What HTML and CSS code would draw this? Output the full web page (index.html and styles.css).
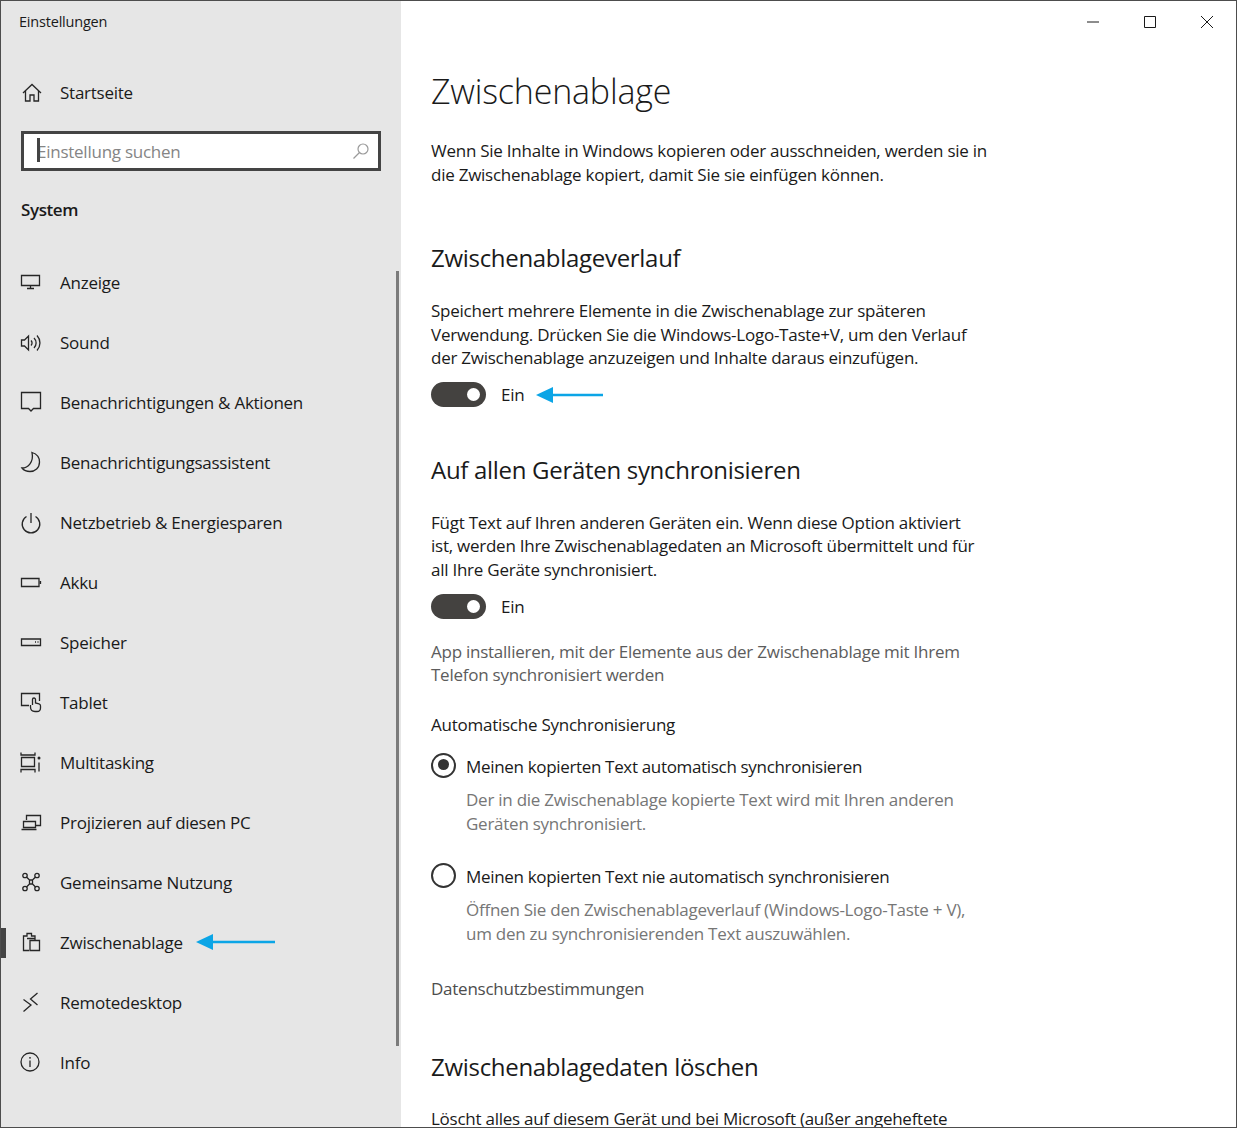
FILE: index.html
```html
<!DOCTYPE html>
<html lang="de">
<head>
  <meta charset="UTF-8" />
  <title>Einstellungen</title>
  <link rel="stylesheet" href="styles.css">
</head>
<body>
  <div class="window">
    <aside class="sidebar">
      <div class="app-title">Einstellungen</div>
      <a class="nav-item home">
        <svg class="icon" viewBox="0 0 24 24"><path d="M3 12 12 3.500l9 8.500M5.500 10v10H10v-6h4v6h4.500V10"/></svg>
        <span>Startseite</span>
      </a>
      <div class="search">
        <span class="caret"></span>
        <span class="search-text">Einstellung suchen</span>
        <svg class="search-icon" viewBox="0 0 18 18"><circle cx="11" cy="7" r="5"/><path d="M7.500 10.500 1.500 16.500"/></svg>
      </div>
      <div class="section-title">System</div>
      <nav class="nav">
        <a class="nav-item">
          <svg class="icon" viewBox="0 0 24 24"><path d="M1.500 4.500h18v10h-18zM10.500 14.500v3M7 17.500h7"/></svg>
          <span>Anzeige</span>
        </a>
        <a class="nav-item">
          <svg class="icon" viewBox="0 0 24 24"><path d="M1.500 9h3l4-4v14l-4-4h-3zM11 9.500a3.500 3.500 0 0 1 0 5M14 7a7 7 0 0 1 0 10M17 4.500a11 11 0 0 1 0 15"/></svg>
          <span>Sound</span>
        </a>
        <a class="nav-item">
          <svg class="icon" viewBox="0 0 24 24"><path d="M1.500 1.500h19v16h-7l-2.500 2.500-2.500-2.500h-7z"/></svg>
          <span>Benachrichtigungen &amp; Aktionen</span>
        </a>
        <a class="nav-item">
          <svg class="icon" viewBox="0 0 24 24"><path d="M12 1.500c5 1.500 7.500 5.500 7.500 9.500 0 6-4.500 9.500-9.500 9.500-3 0-6-1-8-3.500 6 0 12-6 10-15.500z"/></svg>
          <span>Benachrichtigungsassistent</span>
        </a>
        <a class="nav-item">
          <svg class="icon" viewBox="0 0 24 24"><path d="M6.500 5.500a8.800 8.800 0 1 0 9 0M11 2v10"/></svg>
          <span>Netzbetrieb &amp; Energiesparen</span>
        </a>
        <a class="nav-item">
          <svg class="icon" viewBox="0 0 24 24"><path d="M1.500 7.500h17.500v8H1.500zM20.500 10v3"/></svg>
          <span>Akku</span>
        </a>
        <a class="nav-item">
          <svg class="icon" viewBox="0 0 24 24"><path d="M1.500 8h19v6.500h-19zM15 11h1M17.500 11h1"/></svg>
          <span>Speicher</span>
        </a>
        <a class="nav-item">
          <svg class="icon" viewBox="0 0 24 24"><path d="M9 14.500H1.500v-12h18V10M12.500 14V8.500a1.500 1.500 0 0 1 3 0V12l3.500.8c1 .3 1.500 1 1.500 2v2.200c0 2-1.500 3.500-3.500 3.500h-2c-3 0-4.500-2-4.500-4.500v-2"/></svg>
          <span>Tablet</span>
        </a>
        <a class="nav-item">
          <svg class="icon" viewBox="0 0 24 24"><path d="M1 1.500v2.500h14V1.500M1.500 6.500h13v9h-13zM1 21.500V18.500h14v3M19 11.500v9"/><circle class="dot" cx="19" cy="7" r="1.500"/></svg>
          <span>Multitasking</span>
        </a>
        <a class="nav-item">
          <svg class="icon" viewBox="0 0 24 24"><path d="M6.500 9V4.500h14v10h-5M3.500 10.500h12v6h-12zM1.500 18.500h15"/></svg>
          <span>Projizieren auf diesen PC</span>
        </a>
        <a class="nav-item">
          <svg class="icon" viewBox="0 0 24 24"><circle cx="5" cy="4.500" r="2.200"/><circle cx="17" cy="4.500" r="2.200"/><circle cx="5" cy="17.500" r="2.200"/><circle cx="17" cy="17.500" r="2.200"/><path d="M6.500 6 9.500 9M15.500 6l-3 3M6.500 16l3-3M15.500 16l-3-3M9.500 9h3v4h-3z"/></svg>
          <span>Gemeinsame Nutzung</span>
        </a>
        <a class="nav-item active">
          <svg class="icon" viewBox="0 0 24 24"><path d="M9 19.500H3.500V5H7V2.500h4.500V5H15v4M10 9.500h9.500v10H10zM7 7.500h8"/></svg>
          <span>Zwischenablage</span>
          <svg class="arrow arrow-nav" viewBox="0 0 79 20"><path d="M17 10h62" /><path class="head" d="M0 10 17 2v16z"/></svg>
        </a>
        <a class="nav-item">
          <svg class="icon" viewBox="0 0 24 24"><path d="M3.500 8.500 11 14l-7.500 6.500M17.500 2 10.500 8l7 6"/></svg>
          <span>Remotedesktop</span>
        </a>
        <a class="nav-item">
          <svg class="icon" viewBox="0 0 24 24"><circle cx="10" cy="11" r="9"/><path d="M10 9.500V16"/><circle class="dot" cx="10" cy="6.800" r=".9"/></svg>
          <span>Info</span>
        </a>
      </nav>
      <div class="scrollbar"></div>
    </aside>

    <main class="content">
      <div class="titlebar">
        <span class="win-btn"><svg viewBox="0 0 14 14"><path d="M1 7h12"/></svg></span>
        <span class="win-btn"><svg viewBox="0 0 14 14"><path d="M1.500 1.500h11v11h-11z"/></svg></span>
        <span class="win-btn"><svg viewBox="0 0 14 14"><path d="M1 1l12 12M13 1 1 13"/></svg></span>
      </div>

      <h1>Zwischenablage</h1>
      <p class="intro">Wenn Sie Inhalte in Windows kopieren oder ausschneiden, werden sie in die Zwischenablage kopiert, damit Sie sie einfügen können.</p>

      <h2>Zwischenablageverlauf</h2>
      <p>Speichert mehrere Elemente in die Zwischenablage zur späteren Verwendung. Drücken Sie die Windows-Logo-Taste+V, um den Verlauf der Zwischenablage anzuzeigen und Inhalte daraus einzufügen.</p>
      <div class="toggle-row">
        <span class="toggle"></span>
        <span>Ein</span>
        <svg class="arrow arrow-toggle" viewBox="0 0 67 20"><path d="M15 10h52"/><path class="head" d="M0 10 17 2v16z"/></svg>
      </div>

      <h2 class="second">Auf allen Geräten synchronisieren</h2>
      <p>Fügt Text auf Ihren anderen Geräten ein. Wenn diese Option aktiviert<br>ist, werden Ihre Zwischenablagedaten an Microsoft übermittelt und für all Ihre Geräte synchronisiert.</p>
      <div class="toggle-row">
        <span class="toggle"></span>
        <span>Ein</span>
      </div>

      <p class="link install">App installieren, mit der Elemente aus der Zwischenablage mit Ihrem Telefon synchronisiert werden</p>
      <div class="label">Automatische Synchronisierung</div>

      <div class="radio-row first">
        <span class="radio checked"></span>
        <span class="radio-label">Meinen kopierten Text automatisch synchronisieren</span>
      </div>
      <p class="radio-desc">Der in die Zwischenablage kopierte Text wird mit Ihren anderen Geräten synchronisiert.</p>
      <div class="radio-row">
        <span class="radio"></span>
        <span class="radio-label">Meinen kopierten Text nie automatisch synchronisieren</span>
      </div>
      <p class="radio-desc">Öffnen Sie den Zwischenablageverlauf (Windows-Logo-Taste + V), um den zu synchronisierenden Text auszuwählen.</p>

      <div class="privacy">Datenschutzbestimmungen</div>

      <h2 class="third">Zwischenablagedaten löschen</h2>
      <p>Löscht alles auf diesem Gerät und bei Microsoft (außer angeheftete Elemente).</p>
    </main>
  </div>
</body>
</html>
```

FILE: styles.css
```css
html, body {
  margin: 0;
  height: 100%;
  overflow: hidden;
}
body {
  font-family: "Open Sans", "Noto Sans", sans-serif;
  font-size: 17px;
  letter-spacing: -0.25px;
  color: #1a1a1a;
  background: #fff;
}
.window {
  box-sizing: border-box;
  display: flex;
  width: 1237px;
  height: 1128px;
  border: 1px solid #4d4d4d;
  overflow: hidden;
}

/* sidebar */
.sidebar {
  position: relative;
  flex: 0 0 400px;
  background: #e6e6e6;
  padding: 0 20px 0 0;
  box-sizing: border-box;
}
.app-title {
  font-size: 14.500px;
  line-height: 20px;
  letter-spacing: -0.2px;
  padding: 11px 0 0 18px;
}
.nav-item {
  position: relative;
  display: flex;
  align-items: center;
  gap: 16px;
  height: 60px;
  padding-left: 19px;
  white-space: nowrap;
}
.nav-item span {
  margin-bottom: 2px;
}
.home {
  margin-top: 31px;
}
.icon {
  flex: none;
  width: 24px;
  height: 24px;
  fill: none;
  stroke: #262626;
  stroke-width: 1.300;
}
.dot {
  fill: #262626;
  stroke: none;
}
.search {
  position: relative;
  display: flex;
  align-items: center;
  justify-content: space-between;
  box-sizing: border-box;
  width: 360px;
  height: 40px;
  margin: 8px 0 0 20px;
  padding: 0 8px 0 13px;
  background: #fff;
  border: 3px solid #444;
  color: #858585;
}
.caret {
  position: absolute;
  left: 13px;
  top: 4px;
  width: 3px;
  height: 24px;
  background: #444;
}
.search-icon {
  width: 18px;
  height: 18px;
  fill: none;
  stroke: #9a9a9a;
  stroke-width: 1.200;
}
.section-title {
  font-weight: 600;
  letter-spacing: -0.4px;
  line-height: 24px;
  margin: 27px 0 31px 20px;
}
.active::before {
  content: "";
  position: absolute;
  left: 0;
  top: 15px;
  width: 5px;
  height: 30px;
  background: #444;
}
.arrow {
  flex: none;
  fill: none;
  stroke: #0ba5e6;
  stroke-width: 2.500;
}
.arrow .head {
  fill: #0ba5e6;
  stroke: none;
}
.arrow-nav {
  width: 79px;
  height: 20px;
  margin: 0 0 2px -3px;
}
.arrow-toggle {
  width: 67px;
  height: 20px;
  margin-left: -3px;
}
.scrollbar {
  position: absolute;
  left: 395px;
  top: 270px;
  width: 3px;
  height: 775px;
  background: #7b7b7b;
}

/* main column */
.content {
  flex: 1;
  padding: 0 0 0 30px;
  min-width: 0;
}
.titlebar {
  display: flex;
  justify-content: flex-end;
  height: 42px;
  padding-right: 1px;
}
.win-btn {
  display: flex;
  align-items: center;
  justify-content: center;
  width: 57px;
}
.win-btn svg {
  width: 14px;
  height: 14px;
  fill: none;
  stroke: #1a1a1a;
  stroke-width: 1;
}
h1 {
  font-size: 34px;
  font-weight: 300;
  letter-spacing: -0.2px;
  line-height: 46px;
  margin: 25px 0 0;
}
h2 {
  font-size: 24px;
  font-weight: 400;
  letter-spacing: -0.3px;
  line-height: 32px;
  margin: 56px 0 0;
}
p {
  width: 560px;
  line-height: 23.700px;
  margin: 0;
}
.intro {
  margin-top: 25px;
}
h2 + p {
  margin-top: 24.600px;
}
h2.second {
  margin-top: 46px;
}
h2.second + p {
  margin-top: 25px;
}
h2.third {
  margin-top: 50px;
}
.toggle-row {
  display: flex;
  align-items: center;
  gap: 15px;
  height: 26px;
  margin-top: 11.400px;
}
.toggle {
  position: relative;
  width: 55px;
  height: 25px;
  border-radius: 13px;
  background: #444240;
}
.toggle::after {
  content: "";
  position: absolute;
  right: 6px;
  top: 6px;
  width: 13px;
  height: 13px;
  border-radius: 50%;
  background: #fff;
}
.link {
  color: #5c5c5c;
}
.install {
  margin-top: 20.600px;
}
.label {
  line-height: 24px;
  margin-top: 26px;
}
.radio-row {
  display: flex;
  align-items: center;
  gap: 10px;
  height: 26px;
  margin-top: 27px;
}
.radio-row.first {
  margin-top: 15px;
}
.radio {
  box-sizing: border-box;
  position: relative;
  width: 25px;
  height: 25px;
  border: 2.500px solid #333;
  border-radius: 50%;
}
.radio.checked::after {
  content: "";
  position: absolute;
  left: 4.500px;
  top: 4.500px;
  width: 11px;
  height: 11px;
  border-radius: 50%;
  background: #333;
}
.radio-label {
  letter-spacing: -0.33px;
  margin-top: 2px;
}
.radio-desc {
  color: #767676;
  margin: 10px 0 0 35px;
  width: 525px;
}
.privacy {
  color: #4d4d4d;
  line-height: 24px;
  margin-top: 31px;
}
```
